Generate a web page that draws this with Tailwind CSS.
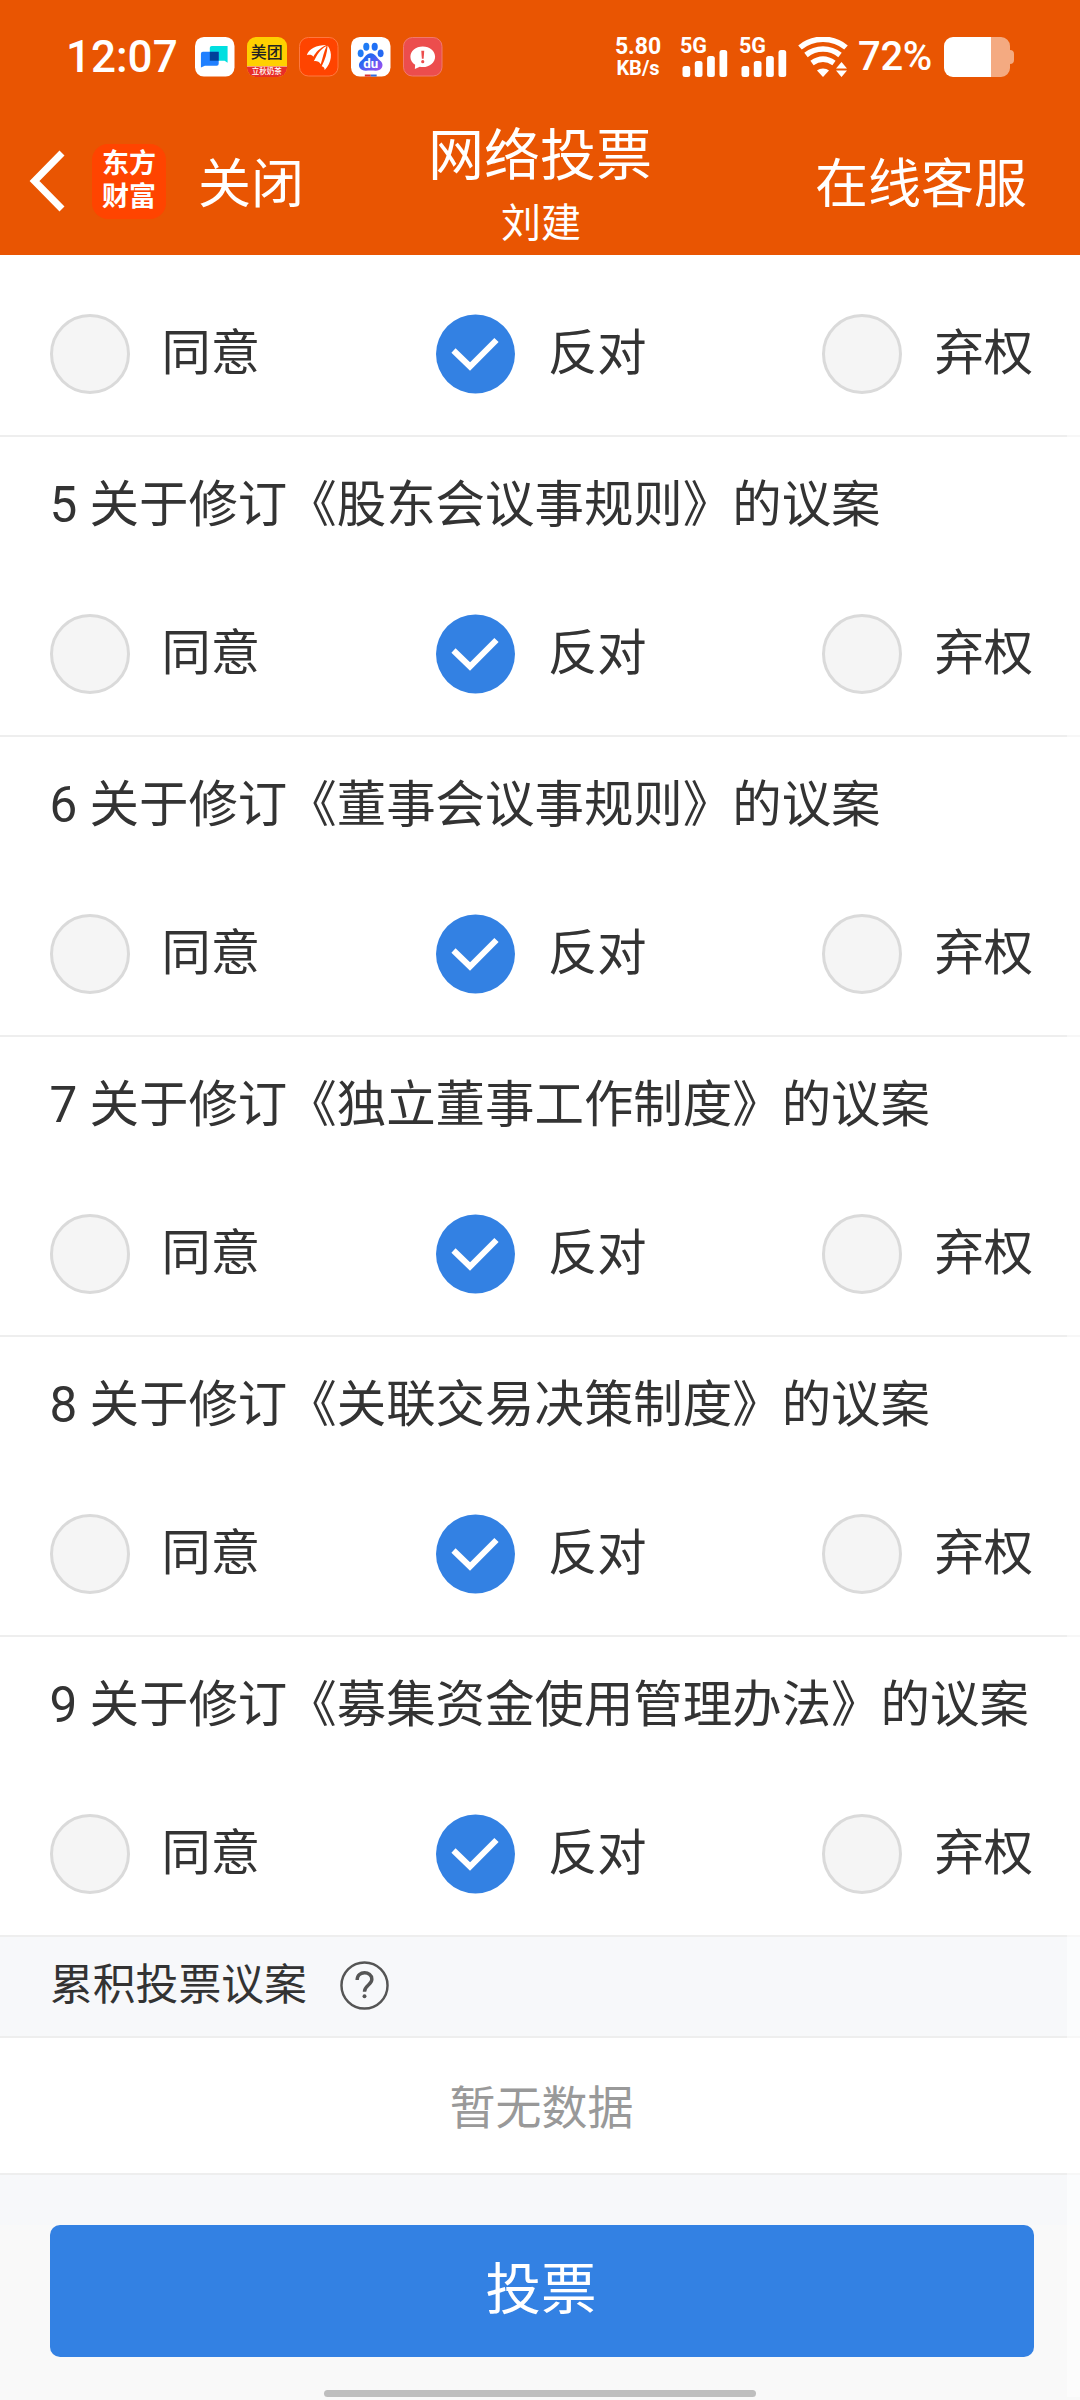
<!DOCTYPE html>
<html lang="zh-CN">
<head>
  <meta charset="UTF-8" />
  <meta name="viewport" content="width=device-width, initial-scale=1.0" />
  <title>网络投票</title>
  <script src="https://cdn.jsdelivr.net/npm/@tailwindcss/browser@4"></script>
</head>

<body class="relative w-[1080px] h-[2400px] overflow-hidden flex flex-col bg-[#f9f9f9] text-[#333333] font-[Roboto,'Noto_Sans_CJK_SC',sans-serif]">

  <header class="h-[255px] shrink-0 bg-[#e95502] text-white">
    <!-- Status bar -->
    <div class="h-[114px] pl-[66px] pr-[66px] flex items-center justify-between">
      <div class="flex items-center gap-[12.5px]">
        <span class="w-[116.5px] text-[44px] leading-none font-medium">12:07</span>
        <svg class="size-[39.5px]" viewBox="0 0 40 40">
          <rect width="40" height="40" rx="9" fill="#fff" />
          <path d="M17 9h16v17l-3-2H15V11a2 2 0 0 1 2-2z" fill="#00dfe0" />
          <path d="M8 15h16v12a2 2 0 0 1-2 2H10l-4 2V17a2 2 0 0 1 2-2z" fill="#2080ff" />
          <path d="M15 15h9v9h-9z" fill="#00409a" />
        </svg>
        <div class="size-[39.5px] rounded-[9px] overflow-hidden bg-[#ffd000] flex flex-col items-center text-center">
          <span class="h-[29px] pt-[4px] text-[16px] leading-[24px] font-medium text-[#222] whitespace-nowrap">美团</span>
          <span class="w-full h-[11px] bg-[#e82d28] border-t border-[#f59a7a] text-[7.5px] leading-[9px] font-medium whitespace-nowrap">立秋奶茶</span>
        </div>
        <svg class="size-[39.5px]" viewBox="0 0 40 40">
          <rect x=".5" y=".5" width="39" height="39" rx="9" fill="#ff4400" stroke="#ff7a42" />
          <path d="M8 18.500C9.500 12 18 8 27.500 8C21 11.500 17 15 14.500 20C13 18 11 17.500 8 18.500z" fill="#fff" />
          <path d="M15 24.500C18 19 21 12 28 9C25.500 14 24 21 22 27.500C20.500 25 18 24 15 24.500z" fill="#fff" />
          <path d="M29 8.500C34.500 16 33 26 26 33.500C26 31 25 30 23 29.500C26.500 23 28.500 16 29 8.500z" fill="#fff" />
        </svg>
        <svg class="size-[39.5px]" viewBox="0 0 40 40">
          <defs>
            <linearGradient id="paw" x1="0" y1="0" x2="1" y2="1">
              <stop offset=".3" stop-color="#2468f2" />
              <stop offset="1" stop-color="#a94cf0" />
            </linearGradient>
          </defs>
          <rect width="40" height="40" rx="9" fill="#fff" />
          <ellipse cx="15.500" cy="9.800" rx="3.100" ry="4" fill="#1f7bf5" />
          <ellipse cx="24" cy="9.800" rx="3.100" ry="4" fill="#1f6ff5" />
          <ellipse cx="9.800" cy="16.500" rx="3" ry="3.900" fill="#1f7bf5" />
          <ellipse cx="30" cy="16.500" rx="3" ry="3.900" fill="#2468f2" />
          <path d="M20 16.500c4.500 0 5.500 4 8.500 6.500c3 2.500 4.500 5 2.500 8.500c-2 3.500-6 2.500-11 2.500s-9 1-11-2.500c-2-3.500-.5-6 2.500-8.500c3-2.500 4-6.500 8.500-6.500z" fill="url(#paw)" />
          <text x="20" y="31.500" text-anchor="middle" font-size="13.500" font-weight="700" fill="#fff">du</text>
          <path d="M14 38h6v2h-6z" fill="#d83030" />
          <path d="M20 38h6v2h-6z" fill="#2f6de0" />
        </svg>
        <svg class="size-[39.5px]" viewBox="0 0 40 40">
          <rect x=".5" y=".5" width="39" height="39" rx="9" fill="#ec4d4d" stroke="#f07a70" />
          <path d="M20 9.500c7.200 0 12.500 4.600 12.500 10.500S27.200 30.500 20 30.500c-1 0-2-.1-3-.3L12 32.500l.3-4.300C9.200 26.300 7.500 23.300 7.500 20C7.500 14.100 12.800 9.500 20 9.500z" fill="#fff" />
          <path d="M18.500 14h3l-.6 8h-1.800z" fill="#ec4d4d" />
          <circle cx="20" cy="25" r="1.600" fill="#ec4d4d" />
        </svg>
      </div>

      <div class="flex items-center">
        <div class="w-[46px] mr-[19px] pb-px flex flex-col items-center font-bold">
          <span class="text-[23px] leading-[22px]">5.80</span>
          <span class="text-[20px] leading-[20px]">KB/s</span>
        </div>
        <svg class="w-[49px] h-[40px] mr-[10px] overflow-visible" viewBox="0 0 49 40" fill="#fff">
          <text x="0" y="15.500" font-size="21.500" font-weight="700">5G</text>
          <rect x="2.500" y="29" width="7.700" height="11" rx="2.500" />
          <rect x="14.800" y="24" width="7.700" height="16" rx="2.500" />
          <rect x="27.100" y="19" width="7.700" height="21" rx="2.500" />
          <rect x="39.500" y="13" width="7.700" height="27" rx="2.500" />
        </svg>
        <svg class="w-[49px] h-[40px] mr-[10px] overflow-visible" viewBox="0 0 49 40" fill="#fff">
          <text x="0" y="15.500" font-size="21.500" font-weight="700">5G</text>
          <rect x="2.500" y="29" width="7.700" height="11" rx="2.500" />
          <rect x="14.800" y="24" width="7.700" height="16" rx="2.500" />
          <rect x="27.100" y="19" width="7.700" height="21" rx="2.500" />
          <rect x="39.500" y="13" width="7.700" height="27" rx="2.500" />
        </svg>
        <svg class="w-[50px] h-[40px] mr-[10px]" viewBox="0 0 50 40" fill="none" stroke="#fff" stroke-width="5.500">
          <path d="M2 10.500C15-.5 35-.5 48 10.500" />
          <path d="M8 18C18 10 32 10 42 18" />
          <path d="M14 26C21 21 29 21 36 26" />
          <path d="M19 33.500C22 30.800 28 30.800 31 33.500L25 40z" fill="#fff" stroke="none" />
          <path d="M38 31.500h11L43.500 25zM38 33.500h11L43.500 40z" fill="#fff" stroke="none" />
        </svg>
        <span class="w-[86px] pb-px text-[40px] leading-none font-medium tracking-[-0.3px] whitespace-nowrap">72%</span>
        <svg class="w-[70px] h-[40px]" viewBox="0 0 70 40" fill="#fff">
          <path d="M9 0H47V40H9a9 9 0 0 1-9-9V9a9 9 0 0 1 9-9z" />
          <path d="M47 0H57a9 9 0 0 1 9 9V13q4 0 4 4V23q0 4-4 4V31a9 9 0 0 1-9 9H47z" fill-opacity=".5" />
        </svg>
      </div>
    </div>

    <!-- Title bar -->
    <div class="h-[141px] px-[53px] grid grid-cols-[1fr_auto_1fr] items-center">
      <div class="-ml-[24px] flex items-center">
        <svg class="w-[36px] h-[62px] mr-[27px] mb-[8px]" viewBox="0 0 36 62" fill="none" stroke="#fff" stroke-width="7">
          <path d="M33 3L5.500 31L33 59" />
        </svg>
        <div class="w-[74px] h-[75px] mb-[7px] rounded-[16px] bg-[#ff4400] flex items-center justify-center">
          <span class="w-[54px] h-[67px] text-[27px] leading-[33px] font-bold">东方<br />财富</span>
        </div>
        <span class="ml-[32px] text-[53px] leading-[60px]">关闭</span>
      </div>
      <div class="flex flex-col items-center">
        <h1 class="pt-[5px] text-[56px] leading-[70px]">网络投票</h1>
        <p class="pt-[3px] pl-[2px] text-[40px] leading-[60px]">刘建</p>
      </div>
      <span class="text-right text-[53px] leading-[60px]">在线客服</span>
    </div>
  </header>

  <main id="proposals" class="shrink-0 bg-white"></main>

  <section class="shrink-0">
    <div class="h-[101px] pl-[50px] pb-[3px] flex items-center bg-[#f7f8fa] border-b-2 border-[#eeeeee]">
      <h2 class="text-[42.8px] leading-[60px]">累积投票议案</h2>
      <svg class="size-[49px] ml-[33px]" viewBox="0 0 50 50" fill="none" stroke="#555" stroke-width="2.500">
        <circle cx="25" cy="25" r="23.500" />
        <path d="M17.500 19.500C17.500 9.500 32.500 10 32.500 18.500C32.500 24.500 25 24.500 25 31.500" stroke-width="3.500" />
        <circle cx="25" cy="36" r="2" fill="#555" stroke="none" />
      </svg>
    </div>
    <div class="h-[137px] pl-[3px] pt-[5px] flex items-center justify-center bg-white border-b-2 border-[#eeeeee] text-[46px] text-[#999999]">
      <span class="leading-[60px]">暂无数据</span>
    </div>
    <div class="h-[50px] bg-[#f7f8fa]"></div>
  </section>

  <footer class="grow flex flex-col items-center bg-[#f9f9f9]">
    <button class="w-[984px] h-[132px] ml-[4px] pr-[2px] pb-px rounded-[10px] bg-[#3381e3] text-white text-[55.5px] leading-[60px]">投票</button>
    <div class="w-[432px] h-[7px] mt-[33px] rounded-full bg-[#bebebe]"></div>
  </footer>

  <!-- Scrollbar track over the page -->
  <div class="absolute top-[255px] right-0 w-[13px] h-[2142px] bg-white/50"></div>

  <script>
    const proposals = [
      { title: '' },
      { title: '5 关于修订《股东会议事规则》的议案' },
      { title: '6 关于修订《董事会议事规则》的议案' },
      { title: '7 关于修订《独立董事工作制度》的议案' },
      { title: '8 关于修订《关联交易决策制度》的议案' },
      { title: '9 关于修订《募集资金使用管理办法》的议案' },
    ];
    const options = ['同意', '反对', '弃权'];
    const selected = '反对';

    const radio = (label) => label === selected
      ? `<svg class="size-[80px]" viewBox="0 0 80 80">
           <circle cx="39.500" cy="40" r="39.500" fill="#3381e3" />
           <path d="M17.500 36.500L34 52.500L60.500 26" fill="none" stroke="#fff" stroke-width="6" />
         </svg>`
      : `<span class="size-[80px] rounded-full border-3 border-[#dadada] bg-[#f5f5f5]"></span>`;

    document.getElementById('proposals').innerHTML = proposals.map((p) => `
      <article class="border-b-2 border-[#eeeeee]">
        ${p.title ? `<h3 class="h-[118px] pl-[49.5px] pt-[38px] text-[49.45px] leading-[60px] whitespace-nowrap">${p.title}</h3>` : ''}
        <div class="h-[180px] pl-[49.5px] pr-[47px] pt-[59px] flex items-start justify-between">
          ${options.map((o) => `
            <label class="flex items-center gap-[32px]">
              ${radio(o)}
              <span class="pb-[3px] text-[49.3px] leading-[60px]">${o}</span>
            </label>`).join('')}
        </div>
      </article>`).join('');
  </script>
</body>
</html>
